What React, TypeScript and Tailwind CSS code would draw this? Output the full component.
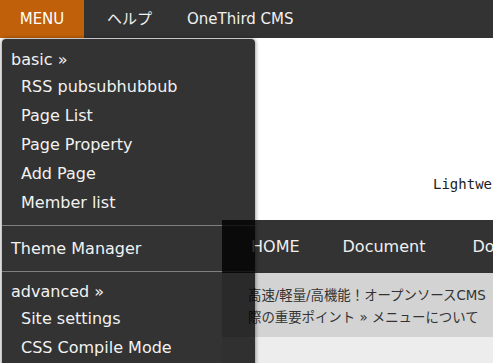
import React from 'react';

const basicItems = ['RSS pubsubhubbub', 'Page List', 'Page Property', 'Add Page', 'Member list'];
const advancedItems = ['Site settings', 'CSS Compile Mode', 'Plugins'];

function Menu() {
    return (
        <div className="absolute left-[2px] top-[39px] w-[253px] overflow-hidden rounded-t-[4px] text-[16px] text-[#f2f2f2] shadow-[0_0_4px_rgba(0,0,0,0.55)]">
            {/* basic */}
            <div className="bg-black/80 pb-[8px] pt-[8px]">
                <div className="h-[25px] pl-[9px] leading-[25px]">basic »</div>
                {basicItems.map((item) => (
                    <div key={item} className="h-[29px] pl-[19px] leading-[29px]">
                        {item}
                    </div>
                ))}
            </div>
            <div className="h-px bg-black/50" />

            <div className="flex h-[45px] items-center bg-black/80 pl-[9px]">Theme Manager</div>
            <div className="h-px bg-black/50" />

            {/* advanced */}
            <div className="bg-black/80 pb-[8px] pt-[7px]">
                <div className="h-[25px] pl-[9px] leading-[25px]">advanced »</div>
                {advancedItems.map((item) => (
                    <div key={item} className="h-[29px] pl-[19px] leading-[29px]">
                        {item}
                    </div>
                ))}
            </div>
        </div>
    );
}

export default function App() {
    return (
        <div className="relative h-[363px] w-[493px] overflow-hidden bg-white font-['DejaVu_Sans','Noto_Sans_CJK_JP',sans-serif]">
            {/* top bar */}
            <header className="flex h-[38px] items-center whitespace-nowrap bg-[#333] text-[15px] text-[#f0f0f0]">
                <div className="flex h-full w-[84px] items-center justify-center bg-[#c0600a] text-white">MENU</div>
                <span className="ml-[23px]">ヘルプ</span>
                <span className="ml-[35px]">OneThird CMS</span>
            </header>

            {/* site header */}
            <div className="h-[182px] whitespace-nowrap pl-[433px] pt-[136px] font-['DejaVu_Sans_Mono',monospace] text-[14px] leading-[20px] text-[#222]">
                Lightweight CMS
            </div>

            <div className="ml-[222px]">
                {/* main nav */}
                <nav className="flex h-[53px] items-center whitespace-nowrap bg-[#333] pl-[29px] text-[16px] text-[#f0f0f0]">
                    <span>HOME</span>
                    <span className="ml-[43px]">Document</span>
                    <span className="ml-[47px]">Download</span>
                </nav>

                {/* breadcrumb */}
                <div className="h-[64px] whitespace-nowrap bg-[#d3d3d3] pl-[26px] pt-[12px] text-[13.4px] leading-[22px] text-[#333]">
                    <div>高速/軽量/高機能！オープンソースCMS</div>
                    <div>際の重要ポイント » メニューについて</div>
                </div>

                <div className="h-[40px] bg-[#ededed]" />
            </div>

            <Menu />
        </div>
    );
}
